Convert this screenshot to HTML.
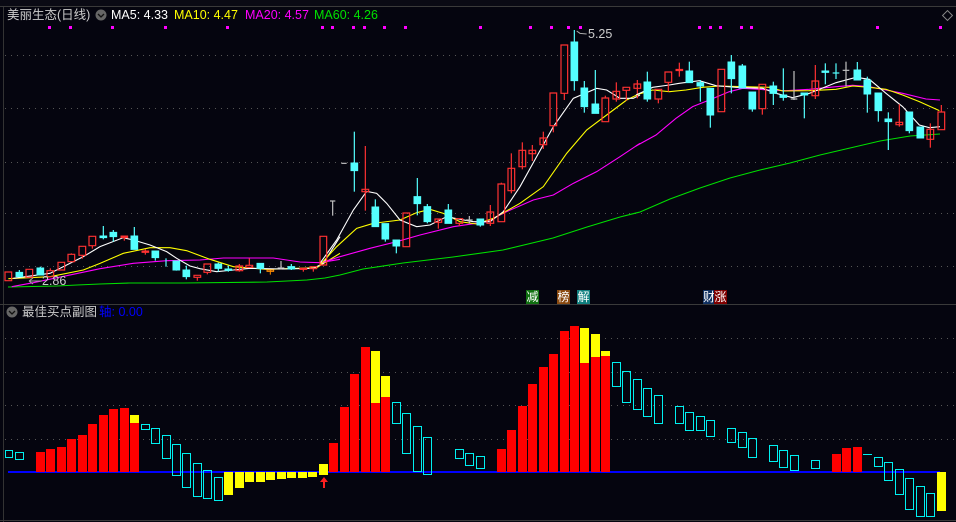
<!DOCTYPE html>
<html><head><meta charset="utf-8"><style>
html,body{margin:0;padding:0;background:#05050f;}
body{width:956px;height:522px;overflow:hidden;position:relative;font-family:"Liberation Sans","Noto Sans CJK SC",sans-serif;}
.t{position:absolute;white-space:nowrap;font-size:12.5px;line-height:14px;}
svg{position:absolute;left:0;top:0;}
.r{fill:none;stroke:#ff3232;stroke-width:1.2;vector-effect:non-scaling-stroke}
.rf{fill:#ff3232;stroke:#ff3232;stroke-width:1;vector-effect:non-scaling-stroke}
.c{fill:#54ffff;stroke:#54ffff;stroke-width:1;vector-effect:non-scaling-stroke}
.rw{stroke:#ff3232;stroke-width:1.2;vector-effect:non-scaling-stroke}
.cw{stroke:#54ffff;stroke-width:1.2;vector-effect:non-scaling-stroke}
.gw{stroke:#c0c0c0;stroke-width:1.2;vector-effect:non-scaling-stroke}
.m{fill:none;stroke-width:1.1;vector-effect:non-scaling-stroke}
.tag{position:absolute;top:290px;height:14px;width:13px;color:#fff;font-size:12px;line-height:14px;text-align:center}
</style></head><body>
<svg width="956" height="522" viewBox="0 0 956 522">
<rect x="0" y="0" width="956" height="6" fill="#0a0a14"/>
<line x1="0" y1="6.5" x2="956" y2="6.5" stroke="#3a3a3a"/>
<line x1="3.5" y1="7" x2="3.5" y2="522" stroke="#333"/>
<line x1="0" y1="304.5" x2="956" y2="304.5" stroke="#3a3a3a"/>
<line x1="0" y1="520.5" x2="956" y2="520.5" stroke="#3a3a3a"/>
<g stroke="#555" stroke-dasharray="1 5">
<line x1="5" y1="55.5" x2="956" y2="55.5"/><line x1="5" y1="108.5" x2="956" y2="108.5"/>
<line x1="5" y1="162.5" x2="956" y2="162.5"/><line x1="5" y1="213.5" x2="956" y2="213.5"/>
<line x1="5" y1="266.5" x2="956" y2="266.5"/>
<line x1="5" y1="338.5" x2="956" y2="338.5"/><line x1="5" y1="372.5" x2="956" y2="372.5"/>
<line x1="5" y1="405.5" x2="956" y2="405.5"/><line x1="5" y1="439.5" x2="956" y2="439.5"/>
</g>
<g fill="#ff00ff">
<rect x="48" y="26" width="3" height="3"/><rect x="69" y="26" width="3" height="3"/><rect x="111" y="26" width="3" height="3"/><rect x="164" y="26" width="3" height="3"/><rect x="226" y="26" width="3" height="3"/><rect x="321" y="26" width="3" height="3"/><rect x="331" y="26" width="3" height="3"/><rect x="352" y="26" width="3" height="3"/><rect x="363" y="26" width="3" height="3"/><rect x="383" y="26" width="3" height="3"/><rect x="404" y="26" width="3" height="3"/><rect x="479" y="26" width="3" height="3"/><rect x="529" y="26" width="3" height="3"/><rect x="550" y="26" width="3" height="3"/><rect x="567" y="26" width="3" height="3"/><rect x="579" y="26" width="3" height="3"/><rect x="698" y="26" width="3" height="3"/><rect x="709" y="26" width="3" height="3"/><rect x="719" y="26" width="3" height="3"/><rect x="740" y="26" width="3" height="3"/><rect x="750" y="26" width="3" height="3"/><rect x="876" y="26" width="3" height="3"/><rect x="939" y="26" width="3" height="3"/>
</g>
<rect x="944" y="12" width="7" height="7" fill="none" stroke="#888" transform="rotate(45 947.5 15.5)"/>

<!-- MA60 full -->
<polyline fill="none" stroke="#00e000" stroke-width="1.1" points="8,287 57,286 77,285 100,284 130,283 183,283 267,282 287,281 307,280 325,278 340,275 363,269 403,263 453,257 503,250 553,238 587,227 620,217 640,212 670,199 700,188 730,178 760,170 790,163 820,155 850,148 880,141 910,136 940,134"/>

<g transform="translate(0,120) scale(0.33333)">
<polyline class="m" stroke="#ff00ff" points="35,500 100,488 200,467 300,446 400,430 500,422 600,420 670,414 820,414 900,426 960,428 1020,418"/>
<polyline class="m" stroke="#ffff00" points="25,476 150,470 250,450 300,430 370,400 450,383 510,383 560,392 630,418 700,440 800,448 950,443 1020,400"/>
<polyline class="m" stroke="#ffffff" points="40,475 150,460 250,410 300,380 370,353 400,360 450,375 500,395 530,415 570,438 600,446 650,455 700,450 750,445 800,446 850,447 940,445 970,430 1020,350"/>
<rect class="r" x="15" y="456" width="20" height="26"/>
<line class="cw" x1="58" y1="450" x2="58" y2="470"/><rect class="c" x="48" y="457" width="20" height="13"/>
<rect class="r" x="78" y="448" width="20" height="24"/>
<line class="cw" x1="121" y1="440" x2="121" y2="465"/><rect class="c" x="111" y="444" width="20" height="21"/>
<line class="rw" x1="151" y1="445" x2="151" y2="452"/><rect class="r" x="141" y="452" width="20" height="18"/>
<rect class="r" x="174" y="427" width="20" height="23"/>
<line class="rw" x1="214" y1="400" x2="214" y2="403"/><rect class="r" x="204" y="403" width="20" height="22"/>
<line class="rw" x1="247" y1="406" x2="247" y2="416"/><rect class="r" x="237" y="379" width="20" height="27"/>
<line class="rw" x1="277" y1="377" x2="277" y2="386"/><rect class="r" x="267" y="349" width="20" height="28"/>
<line class="cw" x1="310" y1="318" x2="310" y2="358"/><rect class="c" x="300" y="348" width="20" height="5"/>
<line class="cw" x1="340" y1="330" x2="340" y2="365"/><rect class="c" x="330" y="337" width="20" height="13"/>
<line class="rw" x1="373" y1="348" x2="373" y2="362"/><rect class="rf" x="363" y="348" width="20" height="5"/>
<line class="cw" x1="403" y1="321" x2="403" y2="388"/><rect class="c" x="393" y="348" width="20" height="40"/>
<line class="rw" x1="436" y1="387" x2="436" y2="404"/><rect class="rf" x="426" y="393" width="20" height="4"/>
<line class="cw" x1="466" y1="413" x2="466" y2="422"/><rect class="c" x="456" y="393" width="20" height="20"/>
<line class="cw" x1="498" y1="415" x2="498" y2="440"/>
<line class="cw" x1="529" y1="423" x2="529" y2="452"/><rect class="c" x="519" y="423" width="20" height="27"/>
<line class="cw" x1="559" y1="437" x2="559" y2="478"/><rect class="c" x="549" y="450" width="20" height="20"/>
<line class="rw" x1="592" y1="472" x2="592" y2="482"/><rect class="r" x="582" y="466" width="20" height="6"/>
<line class="rw" x1="622" y1="457" x2="622" y2="463"/><rect class="r" x="612" y="432" width="20" height="25"/>
<line class="cw" x1="655" y1="428" x2="655" y2="455"/><rect class="c" x="645" y="432" width="20" height="13"/>
<line class="cw" x1="685" y1="437" x2="685" y2="455"/><rect class="c" x="675" y="447" width="20" height="4"/>
<line class="rw" x1="718" y1="432" x2="718" y2="455"/><rect class="r" x="708" y="438" width="20" height="14"/>
<line class="rw" x1="748" y1="415" x2="748" y2="436"/><rect class="r" x="738" y="436" width="20" height="6"/>
<line class="cw" x1="781" y1="445" x2="781" y2="460"/><rect class="c" x="771" y="430" width="20" height="15"/>
<line x1="811" y1="450" x2="811" y2="464" stroke="#ff8c00" vector-effect="non-scaling-stroke"/><rect x="801" y="450" width="20" height="4" fill="none" stroke="#ff8c00" vector-effect="non-scaling-stroke"/>
<line class="gw" x1="843" y1="423" x2="843" y2="448"/><line class="gw" x1="833" y1="444" x2="853" y2="444"/>
<line class="cw" x1="874" y1="432" x2="874" y2="450"/><rect class="c" x="864" y="440" width="20" height="7"/>
<line class="rw" x1="910" y1="445" x2="910" y2="455"/><rect class="r" x="900" y="445" width="20" height="3"/>
<line class="rw" x1="940" y1="446" x2="940" y2="455"/><rect class="r" x="930" y="440" width="20" height="6"/>
</g>

<g transform="translate(320,30) scale(0.33333)">
<polyline class="m" stroke="#ff00ff" points="0,700 60,680 150,655 230,635 300,615 400,590 500,575 560,545 640,510 700,495 760,460 830,425 900,380 960,340"/>
<polyline class="m" stroke="#ffff00" points="0,705 50,650 110,595 160,580 240,570 290,548 330,538 370,550 420,575 470,582 520,565 600,520 670,470 740,370 800,300 860,255 920,210 960,190"/>
<polyline class="m" stroke="#ffffff" points="0,700 50,630 100,540 140,484 170,490 200,520 240,570 290,590 330,585 380,560 420,568 460,575 510,575 550,545 600,470 650,380 700,290 760,205 830,175 860,180 900,205 940,205 960,195"/>
<rect class="r" x="0" y="619" width="20" height="86"/>
<line class="gw" x1="38" y1="513" x2="38" y2="557"/><line class="gw" x1="30" y1="513" x2="46" y2="513"/>
<line class="gw" x1="64" y1="400" x2="80" y2="400"/>
<line class="cw" x1="103" y1="305" x2="103" y2="485"/><rect class="c" x="93" y="399" width="20" height="23"/>
<line class="rw" x1="136" y1="348" x2="136" y2="542"/><rect class="r" x="126" y="478" width="20" height="7"/>
<line class="cw" x1="166" y1="508" x2="166" y2="590"/><rect class="c" x="156" y="531" width="20" height="59"/>
<line class="cw" x1="196" y1="581" x2="196" y2="635"/><rect class="c" x="186" y="581" width="20" height="46"/>
<line class="cw" x1="229" y1="630" x2="229" y2="670"/><rect class="c" x="219" y="630" width="20" height="18"/>
<rect class="r" x="249" y="549" width="20" height="101"/>
<line class="cw" x1="292" y1="444" x2="292" y2="556"/><rect class="c" x="282" y="500" width="20" height="21"/>
<line class="cw" x1="322" y1="522" x2="322" y2="580"/><rect class="c" x="312" y="530" width="20" height="45"/>
<line class="rw" x1="355" y1="567" x2="355" y2="596"/><rect class="r" x="345" y="567" width="20" height="10"/>
<line class="cw" x1="385" y1="522" x2="385" y2="580"/><rect class="c" x="375" y="540" width="20" height="40"/>
<line class="rw" x1="418" y1="580" x2="418" y2="588"/><rect class="r" x="408" y="566" width="20" height="14"/>
<line class="gw" x1="448" y1="558" x2="448" y2="580"/><line class="gw" x1="438" y1="570" x2="458" y2="570"/>
<line class="cw" x1="481" y1="585" x2="481" y2="590"/><rect class="c" x="471" y="567" width="20" height="18"/>
<line class="rw" x1="511" y1="525" x2="511" y2="588"/><rect class="r" x="501" y="546" width="20" height="34"/>
<line class="rw" x1="544" y1="458" x2="544" y2="462"/><rect class="r" x="534" y="462" width="20" height="113"/>
<line class="rw" x1="574" y1="370" x2="574" y2="490"/><rect class="r" x="564" y="415" width="20" height="67"/>
<line class="rw" x1="607" y1="337" x2="607" y2="418"/><rect class="r" x="597" y="361" width="20" height="49"/>
<line class="rw" x1="637" y1="345" x2="637" y2="393"/><rect class="r" x="627" y="361" width="20" height="10"/>
<line class="rw" x1="670" y1="305" x2="670" y2="357"/><rect class="r" x="660" y="324" width="20" height="20"/>
<line class="rw" x1="700" y1="287" x2="700" y2="307"/><rect class="r" x="690" y="189" width="20" height="98"/>
<line class="rw" x1="733" y1="190" x2="733" y2="210"/><rect class="r" x="723" y="45" width="20" height="145"/>
<line class="cw" x1="763" y1="0" x2="763" y2="182"/><rect class="c" x="753" y="36" width="20" height="116"/>
<line class="cw" x1="793" y1="153" x2="793" y2="248"/><rect class="c" x="783" y="174" width="20" height="56"/>
<line class="cw" x1="826" y1="120" x2="826" y2="250"/><rect class="c" x="816" y="222" width="20" height="28"/>
<line class="rw" x1="856" y1="197" x2="856" y2="204"/><rect class="r" x="846" y="204" width="20" height="71"/>
<line class="rw" x1="889" y1="157" x2="889" y2="215"/><rect class="r" x="879" y="184" width="20" height="23"/>
<line class="rw" x1="919" y1="181" x2="919" y2="212"/><rect class="r" x="909" y="172" width="20" height="9"/>
<line class="rw" x1="952" y1="150" x2="952" y2="205"/><rect class="r" x="942" y="162" width="20" height="13"/>
<polyline fill="none" stroke="#aaa" vector-effect="non-scaling-stroke" points="770,3 780,10 800,12"/>
</g>

<g transform="translate(636,0) scale(0.33333)">
<polyline class="m" stroke="#ff00ff" points="0,438 60,405 120,355 170,320 220,300 280,275 320,265 400,270 450,272 520,268 600,260 650,256 700,260 800,280 870,297 912,300"/>
<polyline class="m" stroke="#ffff00" points="0,285 50,270 100,275 150,270 200,262 250,258 400,262 440,273 520,272 600,268 650,258 700,262 750,268 800,285 850,305 910,332"/>
<polyline class="m" stroke="#ffffff" points="0,285 50,262 100,255 130,250 190,242 240,257 300,262 380,265 420,280 470,293 520,280 600,248 660,232 700,238 750,280 800,320 850,375 880,383 912,380"/>
<line class="cw" x1="34" y1="215" x2="34" y2="305"/><rect class="c" x="24" y="246" width="20" height="51"/>
<line class="rw" x1="67" y1="297" x2="67" y2="310"/><rect class="r" x="57" y="268" width="20" height="29"/>
<line class="rw" x1="97" y1="247" x2="97" y2="275"/><rect class="r" x="87" y="216" width="20" height="31"/>
<line class="rw" x1="130" y1="188" x2="130" y2="230"/><rect class="rf" x="120" y="208" width="20" height="4"/>
<line class="cw" x1="160" y1="185" x2="160" y2="248"/><rect class="c" x="150" y="213" width="20" height="35"/>
<line class="cw" x1="193" y1="240" x2="193" y2="305"/><rect class="c" x="183" y="248" width="20" height="10"/>
<line class="cw" x1="223" y1="345" x2="223" y2="383"/><rect class="c" x="213" y="265" width="20" height="80"/>
<rect class="r" x="246" y="208" width="20" height="127"/>
<line class="cw" x1="286" y1="165" x2="286" y2="280"/><rect class="c" x="276" y="186" width="20" height="50"/>
<line class="cw" x1="319" y1="192" x2="319" y2="264"/><rect class="c" x="309" y="198" width="20" height="66"/>
<line class="cw" x1="349" y1="327" x2="349" y2="335"/><rect class="c" x="339" y="276" width="20" height="51"/>
<line class="rw" x1="379" y1="326" x2="379" y2="344"/><rect class="r" x="369" y="253" width="20" height="73"/>
<line class="cw" x1="412" y1="245" x2="412" y2="315"/><rect class="c" x="402" y="258" width="20" height="22"/>
<line class="cw" x1="442" y1="205" x2="442" y2="302"/><rect class="c" x="432" y="285" width="20" height="7"/>
<line class="gw" x1="474" y1="213" x2="474" y2="300"/><line class="gw" x1="464" y1="297" x2="484" y2="297"/>
<line class="cw" x1="505" y1="285" x2="505" y2="355"/><rect class="c" x="495" y="279" width="20" height="6"/>
<line class="rw" x1="538" y1="195" x2="538" y2="297"/><rect class="r" x="528" y="243" width="20" height="44"/>
<line class="cw" x1="568" y1="190" x2="568" y2="253"/><rect class="c" x="558" y="213" width="20" height="4"/>
<line class="cw" x1="600" y1="190" x2="600" y2="237"/><line class="cw" x1="590" y1="219" x2="610" y2="219"/>
<line class="gw" x1="630" y1="185" x2="630" y2="260"/><line class="gw" x1="620" y1="211" x2="640" y2="211"/>
<line class="cw" x1="664" y1="186" x2="664" y2="210"/><rect class="c" x="654" y="210" width="20" height="30"/>
<line class="cw" x1="694" y1="230" x2="694" y2="338"/><rect class="c" x="684" y="240" width="20" height="42"/>
<rect class="c" x="717" y="279" width="20" height="53"/><line class="cw" x1="727" y1="332" x2="727" y2="365"/>
<line class="cw" x1="757" y1="337" x2="757" y2="450"/><rect class="c" x="747" y="357" width="20" height="8"/>
<line class="rw" x1="790" y1="313" x2="790" y2="380"/><rect class="r" x="780" y="367" width="20" height="7"/>
<line class="cw" x1="820" y1="392" x2="820" y2="400"/><rect class="c" x="810" y="336" width="20" height="56"/>
<rect class="c" x="843" y="381" width="20" height="33"/>
<line class="rw" x1="883" y1="370" x2="883" y2="443"/><rect class="r" x="873" y="388" width="20" height="30"/>
<line class="rw" x1="916" y1="315" x2="916" y2="336"/><rect class="r" x="906" y="336" width="20" height="53"/>
</g>
<line x1="30" y1="281" x2="42" y2="281" stroke="#aaa"/><path d="M29 281 l4 -3 M29 281 l4 3" stroke="#aaa" fill="none"/>

<line x1="8" y1="472" x2="940" y2="472" stroke="#0000ff" stroke-width="2"/>
<g fill="#ff0000">
<rect x="36" y="452" width="9" height="20"/><rect x="46" y="449" width="9" height="23"/><rect x="57" y="447" width="9" height="25"/><rect x="67" y="439" width="9" height="33"/><rect x="78" y="435" width="9" height="37"/><rect x="88" y="424" width="9" height="48"/><rect x="99" y="415" width="9" height="57"/><rect x="109" y="409" width="9" height="63"/><rect x="120" y="408" width="9" height="64"/><rect x="130" y="423" width="9" height="49"/>
<rect x="329" y="443" width="9" height="29"/><rect x="340" y="407" width="9" height="65"/><rect x="350" y="374" width="9" height="98"/><rect x="361" y="347" width="9" height="125"/><rect x="371" y="403" width="9" height="69"/><rect x="381" y="397" width="9" height="75"/>
<rect x="497" y="449" width="9" height="23"/><rect x="507" y="430" width="9" height="42"/><rect x="518" y="406" width="9" height="66"/><rect x="528" y="384" width="9" height="88"/><rect x="539" y="367" width="9" height="105"/><rect x="549" y="354" width="9" height="118"/><rect x="560" y="331" width="9" height="141"/><rect x="570" y="326" width="9" height="146"/><rect x="580" y="363" width="9" height="109"/><rect x="591" y="357" width="9" height="115"/><rect x="601" y="356" width="9" height="116"/>
<rect x="832" y="454" width="9" height="18"/><rect x="842" y="448" width="9" height="24"/><rect x="853" y="447" width="9" height="25"/>
</g>
<g fill="#ffff00">
<rect x="130" y="415" width="9" height="8"/><rect x="371" y="351" width="9" height="52"/><rect x="381" y="376" width="9" height="21"/>
<rect x="580" y="328" width="9" height="35"/><rect x="591" y="334" width="9" height="23"/><rect x="601" y="351" width="9" height="5"/>
<rect x="224" y="472" width="9" height="23"/><rect x="235" y="472" width="9" height="16"/><rect x="245" y="472" width="9" height="10"/><rect x="256" y="472" width="9" height="10"/><rect x="266" y="472" width="9" height="8"/><rect x="277" y="472" width="9" height="7"/><rect x="287" y="472" width="9" height="6"/><rect x="298" y="472" width="9" height="6"/><rect x="308" y="472" width="9" height="5"/><rect x="319" y="464" width="9" height="11"/>
<rect x="937" y="472" width="9" height="39"/>
</g>
<g fill="none" stroke="#00f0f0" stroke-width="1">
<rect x="5.5" y="450.5" width="7" height="7"/><rect x="15.5" y="452.5" width="8" height="7"/>
<rect x="141.5" y="424.5" width="8" height="5"/><rect x="151.5" y="428.5" width="8" height="15"/><rect x="162.5" y="435.5" width="8" height="23"/><rect x="172.5" y="444.5" width="8" height="31"/><rect x="182.5" y="453.5" width="8" height="34"/><rect x="193.5" y="463.5" width="8" height="33"/><rect x="203.5" y="470.5" width="8" height="28"/><rect x="214.5" y="477.5" width="8" height="23"/>
<rect x="392.5" y="402.5" width="8" height="21"/><rect x="402.5" y="413.5" width="8" height="40"/><rect x="413.5" y="426.5" width="8" height="45"/><rect x="423.5" y="437.5" width="8" height="37"/>
<rect x="455.5" y="449.5" width="8" height="9"/><rect x="465.5" y="453.5" width="8" height="12"/><rect x="476.5" y="456.5" width="8" height="12"/>
<rect x="612.5" y="362.5" width="8" height="24"/><rect x="622.5" y="371.5" width="8" height="31"/><rect x="633.5" y="379.5" width="8" height="30"/><rect x="643.5" y="388.5" width="8" height="28"/><rect x="654.5" y="395.5" width="8" height="28"/>
<rect x="675.5" y="406.5" width="8" height="17"/><rect x="685.5" y="412.5" width="8" height="18"/><rect x="696.5" y="416.5" width="8" height="14"/><rect x="706.5" y="420.5" width="8" height="16"/>
<rect x="727.5" y="428.5" width="8" height="14"/><rect x="738.5" y="432.5" width="8" height="15"/><rect x="748.5" y="438.5" width="8" height="19"/>
<rect x="769.5" y="445.5" width="8" height="16"/><rect x="779.5" y="450.5" width="8" height="17"/><rect x="790.5" y="455.5" width="8" height="15"/><rect x="811.5" y="460.5" width="8" height="8"/>
<line x1="863" y1="454.5" x2="872" y2="454.5"/>
<rect x="874.5" y="457.5" width="8" height="9"/><rect x="884.5" y="462.5" width="8" height="18"/><rect x="895.5" y="469.5" width="8" height="25"/><rect x="905.5" y="478.5" width="8" height="31"/><rect x="916.5" y="486.5" width="8" height="30"/><rect x="926.5" y="493.5" width="8" height="23"/>
</g>
<path d="M324 477 l-4 5 h3 v6 h2 v-6 h3 z" fill="#ff2020"/>
<circle cx="101" cy="15" r="5.5" fill="#666"/><path d="M98 14 l3 3 l3 -3" stroke="#111" stroke-width="1.3" fill="none"/>
<circle cx="12" cy="312" r="5.5" fill="#666"/><path d="M9 311 l3 3 l3 -3" stroke="#111" stroke-width="1.3" fill="none"/>
</svg>
<div class="t" style="left:7px;top:8px;color:#ccc">美丽生态(日线)</div>
<div class="t" style="left:111px;top:8px;color:#fff">MA5: 4.33</div>
<div class="t" style="left:174px;top:8px;color:#ffff00">MA10: 4.47</div>
<div class="t" style="left:245px;top:8px;color:#ff00ff">MA20: 4.57</div>
<div class="t" style="left:314px;top:8px;color:#00e000">MA60: 4.26</div>
<div class="t" style="left:588px;top:27px;color:#ccc">5.25</div>
<div class="t" style="left:42px;top:274px;color:#ccc">2.86</div>
<div class="t" style="left:22px;top:305px;color:#ccc">最佳买点副图</div>
<div class="t" style="left:99px;top:305px;color:#0000ff">轴: 0.00</div>
<div class="tag" style="left:526px;background:#107010">减</div>
<div class="tag" style="left:557px;background:#8a4a10">榜</div>
<div class="tag" style="left:577px;background:#108080">解</div>
<div class="tag" style="left:703px;width:11px;background:#103060">财</div>
<div class="tag" style="left:714px;background:#800000">涨</div>
</body></html>
